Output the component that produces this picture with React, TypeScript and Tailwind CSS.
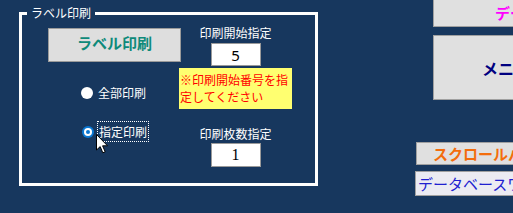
import React from "react";

const jp = { fontFamily: '"Noto Sans CJK JP", "Noto Sans", sans-serif' };

export default function App() {
  return (
    <div
      className="relative flex w-[513px] h-[213px] overflow-hidden bg-[#17375e] text-white"
      style={jp}
    >
      {/* Left: label print frame */}
      <div className="pl-[19px] pt-[12px] shrink-0">
        <div className="relative w-[299px] h-[174px] border-[3px] border-white">
          <span className="absolute left-[5px] top-[-11px] bg-[#17375e] px-[4px] text-[12px] leading-[18px] text-white">
            ラベル印刷
          </span>
          <div className="flex">
            {/* left column */}
            <div className="flex flex-col w-[157px] shrink-0 pt-[13px]">
              <button className="ml-[26px] w-[133px] h-[34px] bg-[#dedede] border border-[#9a9a9a] text-[#0e8a7a] font-bold text-[15px] leading-[20px] pb-[4px]">
                ラベル印刷
              </button>
              <div className="ml-[59px] mt-[23px] h-[16px] flex items-center">
                <span className="w-[12px] h-[12px] rounded-full bg-white shrink-0" />
                <span className="ml-[5px] text-[12px] leading-[16px] text-white">全部印刷</span>
              </div>
              <div className="ml-[60px] mt-[20px] h-[21px] flex items-center">
                <span className="w-[12px] h-[12px] rounded-full bg-[#0a78d4] shrink-0 flex items-center justify-center">
                  <span className="w-[8px] h-[8px] rounded-full bg-white flex items-center justify-center">
                    <span className="w-[4px] h-[4px] rounded-full bg-[#0a78d4]" />
                  </span>
                </span>
                <span className="ml-[3px] h-[21px] px-[1px] border border-dotted border-white text-[12px] leading-[19px] text-white">
                  指定印刷
                </span>
              </div>
            </div>
            {/* right column */}
            <div className="flex flex-col items-center w-[113px] shrink-0 pt-[10px]">
              <div className="h-[16px] text-[12px] leading-[16px] text-white">印刷開始指定</div>
              <div className="mt-[2px] w-[50px] h-[23px] bg-white border border-[#9a9a9a] flex items-center justify-center text-black text-[15px] leading-[20px]" style={{ fontFamily: '"Noto Sans", sans-serif' }}>
                5
              </div>
              <div className="mt-[2px] w-[113px] h-[41px] bg-[#ffff70] text-[#ff0000] text-[12px] leading-[17px] px-[1px] pt-[3px]">
                ※印刷開始番号を指
                <br />
                定してください
              </div>
              <div className="mt-[17px] h-[16px] text-[12px] leading-[16px] text-white">印刷枚数指定</div>
              <div className="mt-[1px] w-[50px] h-[24px] bg-white border border-[#9a9a9a] flex items-center justify-center text-black text-[16px] leading-[20px]" style={{ fontFamily: '"Liberation Serif", serif' }}>
                1
              </div>
            </div>
          </div>
        </div>
      </div>

      {/* Right column (overflows the window) */}
      <div className="ml-[97px] flex flex-col w-[220px] shrink-0">
        <div className="ml-[18px] mt-[-2px] h-[29px] bg-[#e0e0e0] border border-[#a0a0a0] flex items-center pl-[61px] text-[#ff00ff] font-bold text-[15px] leading-[20px] whitespace-nowrap">
          データ更新
        </div>
        <div className="ml-[18px] mt-[8px] h-[65px] bg-[#e0e0e0] border border-[#a0a0a0] flex items-center pl-[48px] text-[#000080] font-bold text-[16px] leading-[20px] whitespace-nowrap">
          メニュー
        </div>
        <div className="ml-[1px] mt-[42px] h-[23px] bg-[#e0e0e0] border border-[#a0a0a0] flex items-center pl-[16px] text-[#f36d0c] font-bold text-[15px] leading-[20px] whitespace-nowrap">
          スクロールバー
        </div>
        <div className="mt-[6px] h-[25px] bg-[#ebebf2] border border-[#a0a0a0] flex items-center pl-[2px] text-[#2020d0] text-[15px] leading-[20px] whitespace-nowrap">
          データベースワーク
        </div>
      </div>

      {/* mouse cursor overlay */}
      <svg
        className="absolute left-[96px] top-[134px]"
        width="14"
        height="21"
        viewBox="0 0 14 21"
      >
        <path
          d="M0.5 0.5 L0.5 16 L4.2 12.6 L6.8 18.8 L9.2 17.8 L6.6 11.8 L11.5 11.8 Z"
          fill="white"
          stroke="black"
          strokeWidth="1"
          strokeLinejoin="miter"
        />
      </svg>
    </div>
  );
}
